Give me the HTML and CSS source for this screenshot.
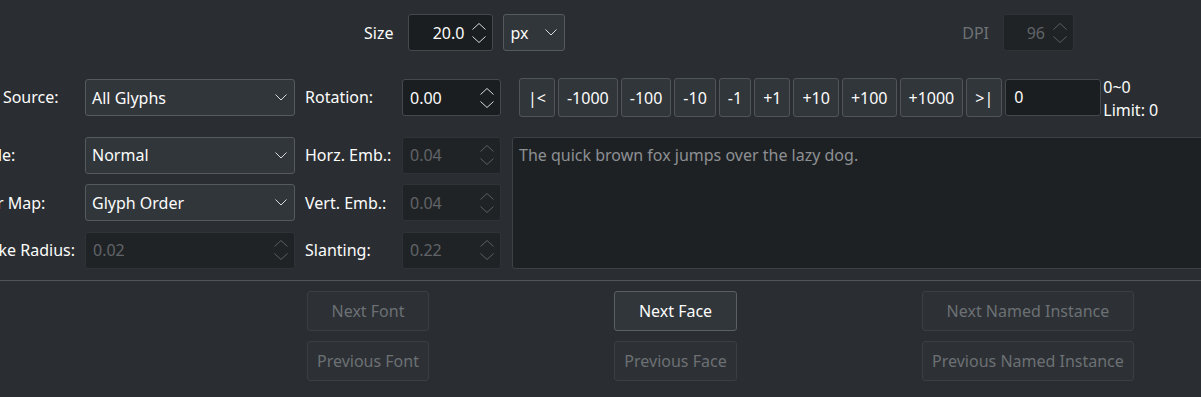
FILE: index.html
```html
<!DOCTYPE html>
<html lang="en">

<head>
    <meta charset="utf-8">
    <title>ftinspect - Continuous View</title>
    <link rel="stylesheet" href="styles.css">
</head>

<body>

    <section class="sizeBar">
        <div class="group">
            <span class="lbl sizeLbl">Size</span>
            <div class="spin sizeSpin">
                <span class="val right">20.0</span>
                <svg class="arrows" width="14" height="20" viewBox="0 0 14 20"><path d="M0.5 6.5 L7 0.5 L13.5 6.5 M0.5 13.5 L7 19.5 L13.5 13.5"/></svg>
            </div>
            <div class="combo unitCombo">
                <span class="val">px</span>
                <svg class="chev" width="12" height="7" viewBox="0 0 12 7"><path d="M0.5 0.5 L6 6 L11.5 0.5"/></svg>
            </div>
        </div>
        <div class="group">
            <span class="lbl dpiLbl off">DPI</span>
            <div class="spin dpiSpin off">
                <span class="val right">96</span>
                <svg class="arrows" width="14" height="20" viewBox="0 0 14 20"><path d="M0.5 6.5 L7 0.5 L13.5 6.5 M0.5 13.5 L7 19.5 L13.5 13.5"/></svg>
            </div>
        </div>
    </section>

    <section class="controls">
        <!-- row: source / rotation / glyph navigation -->
        <span class="lbl top">Text Source:</span>
        <div class="combo top">
            <span class="val">All Glyphs</span>
            <svg class="chev" width="12" height="7" viewBox="0 0 12 7"><path d="M0.5 0.5 L6 6 L11.5 0.5"/></svg>
        </div>
        <span class="lbl top">Rotation:</span>
        <div class="spin top">
            <span class="val">0.00</span>
            <svg class="arrows" width="14" height="20" viewBox="0 0 14 20"><path d="M0.5 6.5 L7 0.5 L13.5 6.5 M0.5 13.5 L7 19.5 L13.5 13.5"/></svg>
        </div>
        <nav class="glyphNav">
            <button class="step">|&lt;</button>
            <button class="step">-1000</button>
            <button class="step">-100</button>
            <button class="step">-10</button>
            <button class="step">-1</button>
            <button class="step">+1</button>
            <button class="step">+10</button>
            <button class="step">+100</button>
            <button class="step">+1000</button>
            <button class="step">&gt;|</button>
            <div class="indexInput">0</div>
            <div class="limit">0~0<br>Limit: 0</div>
        </nav>

        <!-- row: mode / horizontal emboldening -->
        <span class="lbl">Mode:</span>
        <div class="combo">
            <span class="val">Normal</span>
            <svg class="chev" width="12" height="7" viewBox="0 0 12 7"><path d="M0.5 0.5 L6 6 L11.5 0.5"/></svg>
        </div>
        <span class="lbl">Horz. Emb.:</span>
        <div class="spin off">
            <span class="val">0.04</span>
            <svg class="arrows" width="14" height="20" viewBox="0 0 14 20"><path d="M0.5 6.5 L7 0.5 L13.5 6.5 M0.5 13.5 L7 19.5 L13.5 13.5"/></svg>
        </div>
        <div class="sample">The quick brown fox jumps over the lazy dog.</div>

        <!-- row: char map / vertical emboldening -->
        <span class="lbl">Char Map:</span>
        <div class="combo">
            <span class="val">Glyph Order</span>
            <svg class="chev" width="12" height="7" viewBox="0 0 12 7"><path d="M0.5 0.5 L6 6 L11.5 0.5"/></svg>
        </div>
        <span class="lbl">Vert. Emb.:</span>
        <div class="spin off">
            <span class="val">0.04</span>
            <svg class="arrows" width="14" height="20" viewBox="0 0 14 20"><path d="M0.5 6.5 L7 0.5 L13.5 6.5 M0.5 13.5 L7 19.5 L13.5 13.5"/></svg>
        </div>

        <!-- row: stroke radius / slanting -->
        <span class="lbl">Stroke Radius:</span>
        <div class="spin off">
            <span class="val">0.02</span>
            <svg class="arrows" width="14" height="20" viewBox="0 0 14 20"><path d="M0.5 6.5 L7 0.5 L13.5 6.5 M0.5 13.5 L7 19.5 L13.5 13.5"/></svg>
        </div>
        <span class="lbl">Slanting:</span>
        <div class="spin off">
            <span class="val">0.22</span>
            <svg class="arrows" width="14" height="20" viewBox="0 0 14 20"><path d="M0.5 6.5 L7 0.5 L13.5 6.5 M0.5 13.5 L7 19.5 L13.5 13.5"/></svg>
        </div>
    </section>

    <hr class="sep">

    <section class="pager">
        <div class="col">
            <button class="pageBtn" disabled>Next Font</button>
            <button class="pageBtn" disabled>Previous Font</button>
        </div>
        <div class="col">
            <button class="pageBtn">Next Face</button>
            <button class="pageBtn" disabled>Previous Face</button>
        </div>
        <div class="col">
            <button class="pageBtn" disabled>Next Named Instance</button>
            <button class="pageBtn" disabled>Previous Named Instance</button>
        </div>
    </section>

</body>

</html>
```

FILE: styles.css
```css
body {
    margin: 0;
    height: 397px;
    overflow: hidden;
    background: #2a2e32;
    color: #fcfcfc;
    font-family: 'Noto Sans', 'DejaVu Sans', sans-serif;
    font-size: 16px;
    line-height: 22px;
}

svg path {
    fill: none;
    stroke: #fcfcfc;
    stroke-width: 1;
}

/* top row: size + dpi */

.sizeBar {
    display: flex;
    justify-content: space-between;
    height: 37px;
    margin-top: 14px;
    padding: 0 127px 0 364px;
}

.group {
    display: flex;
    align-items: center;
}

.sizeLbl {
    margin-right: 15px;
}

.dpiLbl {
    margin-right: 14px;
}

.sizeSpin {
    width: 85px;
}

.dpiSpin {
    width: 71px;
}

.unitCombo {
    width: 62px;
    margin-left: 10px;
}

/* widgets */

.lbl {
    white-space: nowrap;
}

.lbl.off {
    color: #6e7276;
}

.spin,
.combo {
    box-sizing: border-box;
    height: 37px;
    display: flex;
    align-items: center;
    border: 1px solid #44494e;
    border-radius: 3px;
    background: #1b1e20;
    padding: 0 6px 0 7px;
}

.combo {
    background: #31363b;
    border-color: #555a5f;
    padding: 0 7px 0 6px;
}

.val {
    flex: 1;
    white-space: nowrap;
}

.val.right {
    text-align: right;
    margin-right: 8px;
}

.spin.off {
    background: #202326;
    border-color: #2f3337;
    color: #606468;
}

.spin.off path {
    stroke: #5a5e62;
}

.chev path,
.arrows path {
    stroke: #d8d9da;
}

/* grid of settings */

.controls {
    display: grid;
    grid-template-columns: 107px 210px 87px 99px 1fr;
    grid-template-rows: 48.1px 37px 37px 37px;
    column-gap: 10px;
    row-gap: 10.6px;
    margin: 27px 0 0 -32px;
    align-items: center;
}

.controls .top {
    align-self: start;
}

.controls .spin.top,
.controls .combo.top {
    margin-top: 1.3px;
}

.controls .lbl.top {
    margin-top: 8px;
}

.glyphNav {
    align-self: start;
    display: flex;
    align-items: flex-start;
    gap: 3px;
    margin-left: 8px;
}

.step {
    box-sizing: border-box;
    height: 39px;
    padding: 0 8px;
    border: 1px solid #50555a;
    border-radius: 3px;
    background: #31363b;
    color: #fcfcfc;
    font: inherit;
    white-space: nowrap;
}

.indexInput {
    box-sizing: border-box;
    width: 96px;
    height: 37px;
    margin-top: 1.3px;
    padding: 0 8px;
    border: 1px solid #44494e;
    border-radius: 3px;
    background: #1b1e20;
    line-height: 35px;
}

.limit {
    margin: -2px 0 0 -1px;
    line-height: 22.6px;
    white-space: nowrap;
}

.sample {
    grid-column: 5;
    grid-row: 2 / span 3;
    align-self: stretch;
    margin: 0 -6px 0 1px;
    padding: 6px 6px;
    border: 1px solid #3c4146;
    border-radius: 3px;
    background: #1e2124;
    color: #8d9093;
    white-space: nowrap;
}

/* separator + page buttons */

.sep {
    margin: 11.4px 0 0 0;
    border: 0;
    height: 1px;
    background: #50555a;
}

.pager {
    display: flex;
    gap: 185.4px;
    padding: 10px 0 0 307px;
}

.col {
    display: flex;
    flex-direction: column;
    gap: 10px;
}

.pageBtn {
    box-sizing: border-box;
    height: 40px;
    padding: 0 9px;
    border: 1px solid #5a5f64;
    border-radius: 3px;
    background: #31363b;
    color: #fcfcfc;
    font: inherit;
    white-space: nowrap;
}

.pageBtn:disabled {
    background: #2d3135;
    border-color: #3b3f44;
    color: #6c7074;
}
```
